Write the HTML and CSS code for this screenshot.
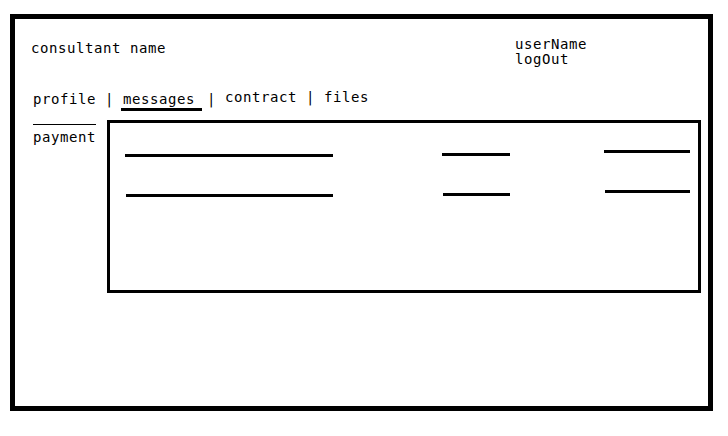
FILE: index.html
```html
<!DOCTYPE html>
<html lang="en">
<head>
  <meta charset="UTF-8" />
  <meta name="viewport" content="width=device-width, initial-scale=1.0" />
  <title>Consultant</title>
  <link rel="stylesheet" href="styles.css">
</head>
<body>
  <div class="frame">
    <!-- Header -->
    <div class="header">
      <div class="title">consultant name</div>
      <div class="user">
        <div>userName</div>
        <div>logOut</div>
      </div>
    </div>

    <!-- Tabs -->
    <div class="nav">profile | <span class="active">messages</span> | <span class="raised">contract | files</span></div>

    <!-- Body -->
    <div class="main">
      <div class="side">
        <div class="side-item">payment</div>
      </div>
      <div class="box">
        <div class="col col-a">
          <div class="bar"></div>
          <div class="bar shift"></div>
        </div>
        <div class="col col-b">
          <div class="bar"></div>
          <div class="bar shift"></div>
        </div>
        <div class="col col-c">
          <div class="bar"></div>
          <div class="bar shift"></div>
        </div>
      </div>
    </div>
  </div>
</body>
</html>
```

FILE: styles.css
```css
*, *::before, *::after { box-sizing: border-box; }
html, body {
  margin: 0; padding: 0; background: #fff; color: #000;
  font-family: 'DejaVu Sans Mono', monospace;
  font-size: 14px; letter-spacing: 0.57px; line-height: 16px;
}

.frame {
  margin: 14px 0 0 10px;
  width: 703px; height: 397px;
  border: 5px solid #000;
  padding: 18px 0 0 16px;
}

.header { display: flex; align-items: flex-start; }
.title { flex: 0 0 484px; margin-top: 3px; }
.user { line-height: 15px; }

.nav { height: 16px; margin: 22px 0 0 2px; white-space: pre; }
.nav .active {
  display: inline-block;
  padding: 0 7px 1px 2px; margin: 0 -4px 0 -2px;
  border-bottom: 3px solid #000;
}
.nav .raised { vertical-align: 2px; }

.main { display: flex; align-items: flex-start; margin-top: 15px; }
.side { flex: 0 0 76px; padding: 4px 0 0 2px; }
.side-item {
  display: inline-block;
  border-top: 1px solid #000;
  padding-top: 4px;
}

.box {
  display: flex; align-items: flex-start;
  width: 594px; height: 173px;
  border: 3px solid #000;
  padding-left: 15px;
}
.col { display: flex; flex-direction: column; gap: 37px; }
.col-a { width: 208px; padding-top: 31px; }
.col-b { width: 68px; margin-left: 109px; padding-top: 30px; }
.col-c { width: 86px; margin-left: 94px; padding-top: 27px; }
.bar { height: 3px; background: #000; }
.bar.shift { margin-left: 1px; }
```
